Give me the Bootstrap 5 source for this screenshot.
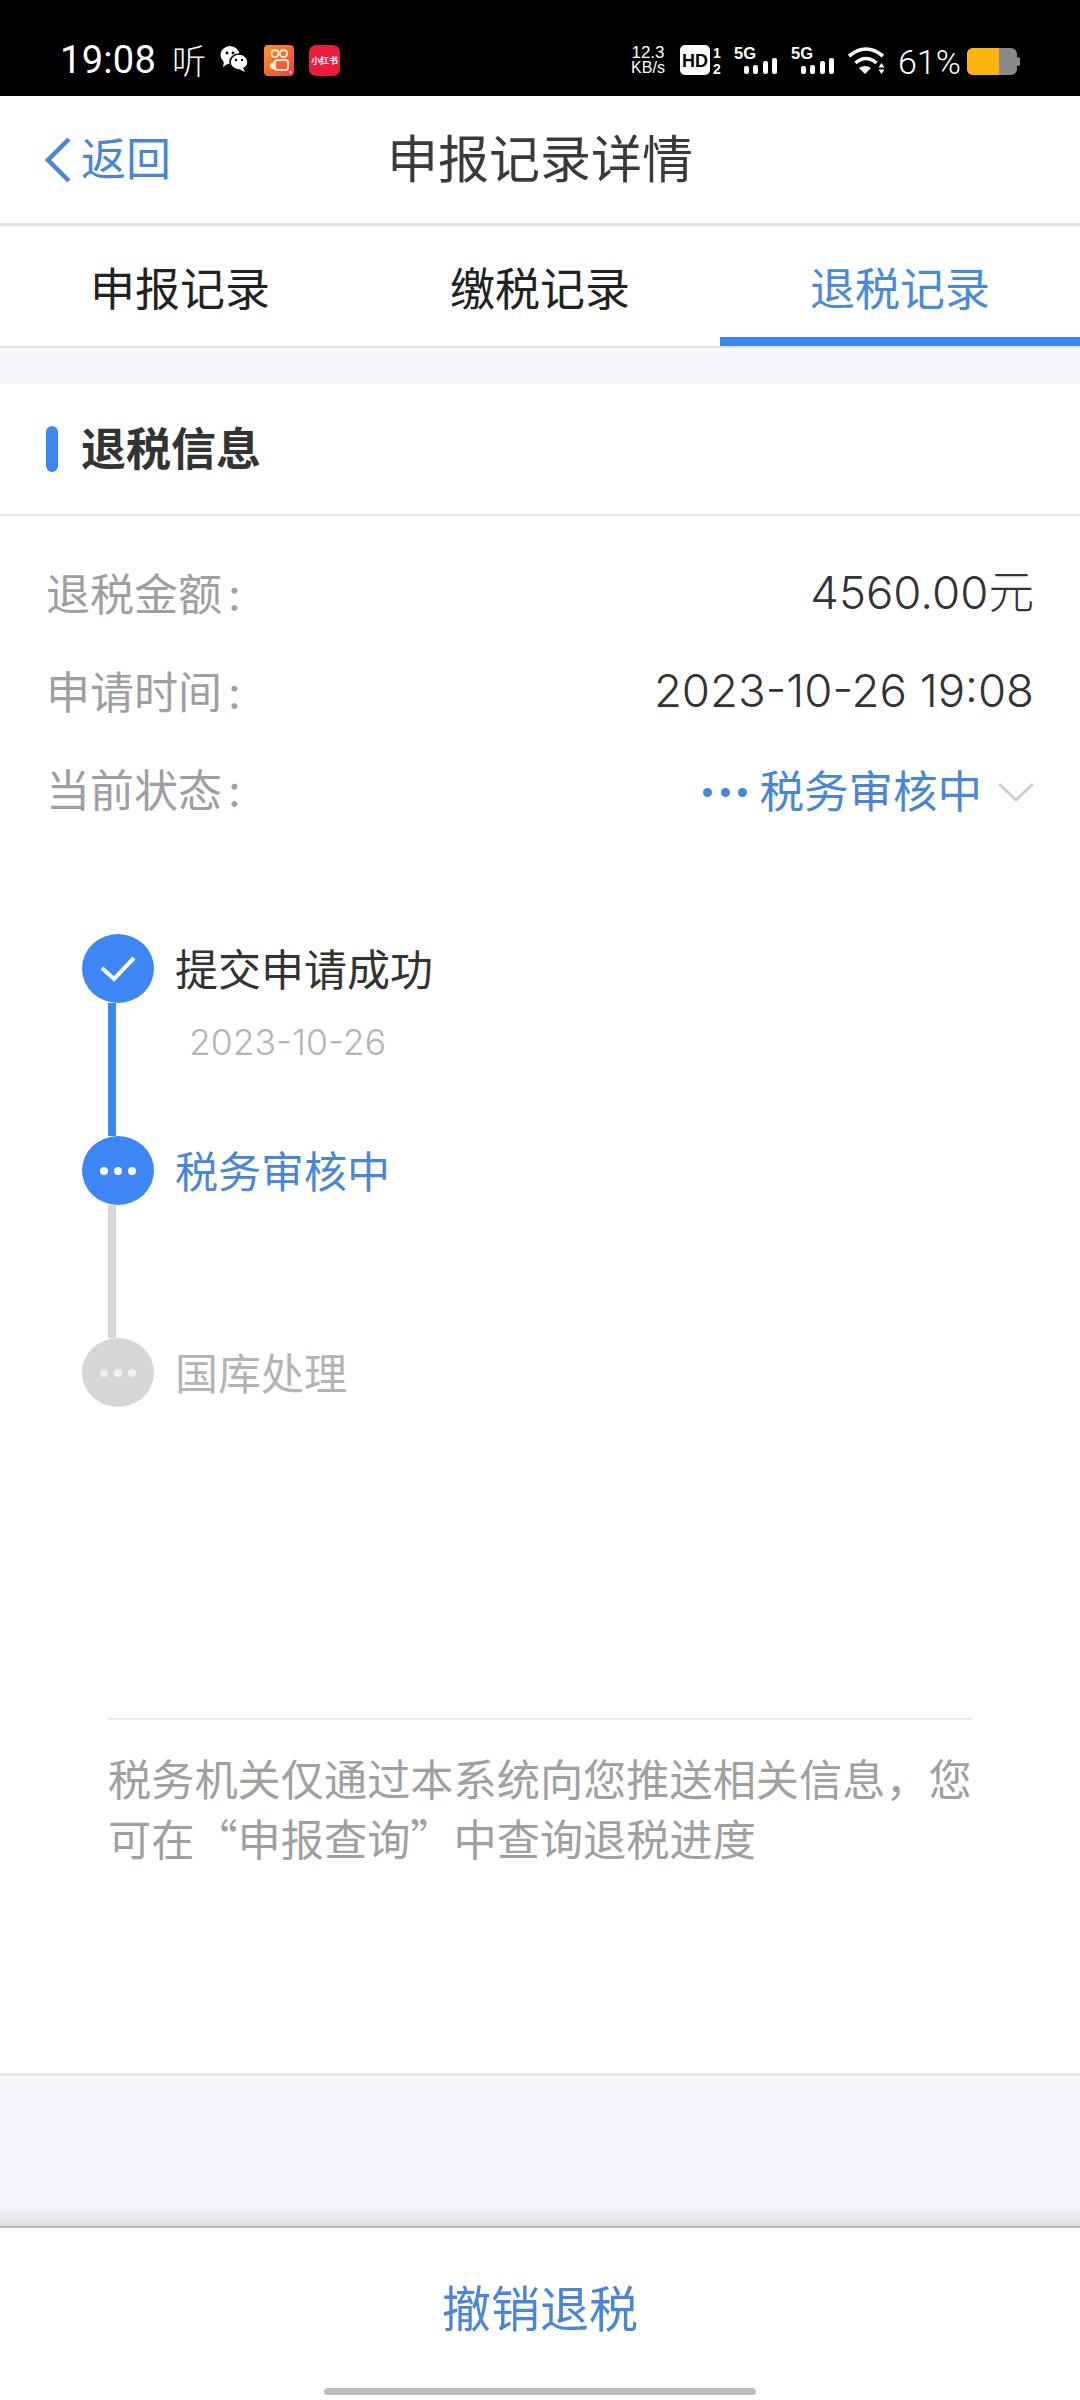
<!DOCTYPE html>
<html lang="zh-CN">
<head>
    <meta charset="UTF-8">
    <meta name="viewport" content="width=device-width, initial-scale=1.0">
    <title>申报记录详情</title>
    <link href="https://cdn.jsdelivr.net/npm/bootstrap@5.3.0/dist/css/bootstrap.min.css" rel="stylesheet">
    <style>
        html, body { margin: 0; background: #fff; }
        body { font-family: Inter, "Noto Sans CJK SC", sans-serif; color: #333; width: 1080px; height: 2400px; overflow: hidden; }
        .screen { width: 1080px; height: 2400px; }
        .screen > * { flex-shrink: 0; }

        /* status bar */
        .status-bar { height: 96px; background: #000; color: #fff; padding: 45px 60px 0 60px; }
        .status-bar svg { display: block; }
        .status-time { font-family: Roboto, sans-serif; font-size: 38px; line-height: 30px; width: 112px; letter-spacing: .3px; }
        .status-ting { font-size: 34px; line-height: 30px; width: 48px; font-weight: 200; font-family: "Noto Sans CJK SC", sans-serif; }
        .wechat-icon { margin: 1px 16px 0 0; }
        .tile-kw { margin-right: 15px; }
        .app-tile { width: 30px; height: 31px; border-radius: 4px; }
        .tile-red { width: 31px; border-radius: 7px; background: #ee1c3c; font-size: 9px; line-height: 31px; letter-spacing: -.2px; text-align: center; color: #fff; font-family: "Noto Sans CJK SC", sans-serif; font-weight: 700; white-space: nowrap; }
        .net-speed { font-family: "Liberation Sans", sans-serif; font-size: 17px; line-height: 15px; text-align: center; width: 36px; margin-right: 14px; }
        .net-speed div + div { font-size: 16px; }
        .gap-hd { margin-right: 11px; }
        .gap-sig { margin-right: 13px; }
        .batt-text { font-family: Roboto, sans-serif; font-size: 34px; line-height: 34px; font-weight: 300; width: 58px; margin-right: 11px; }
        .batt-icon { margin-top: 3px; }

        /* header + tabs */
        .top-bar { height: 127px; border-bottom: 3px solid #e4e4e4; box-sizing: content-box; }
        .top-side { flex: 1 1 0; }
        .back-link { padding-left: 45px; color: #4a86d6; font-size: 45px; line-height: 1; }
        .back-link span { margin-left: 10px; }
        .top-title { font-size: 51px; color: #3a3a3a; padding-top: 2px; }
        .tab-row { height: 122px; border-bottom: 2px solid #e4e4e4; }
        .tab-item { width: 360px; font-size: 45px; color: #222; text-align: center; line-height: 128px; }
        .tab-on { color: #4a8ad6; border-bottom: 9px solid #3f86f5; }
        .gray-band { height: 36px; background: #f5f6fa; }

        /* card */
        .section-head { height: 130px; padding-left: 46px; border-bottom: 2px solid #e8e8e8; box-sizing: content-box; }
        .section-bar { width: 12px; height: 46px; border-radius: 6px; background: #3f86f5; margin-right: 23px; }
        .section-title { font-size: 45px; font-weight: 700; color: #333; padding-top: 2px; }
        .info-list { padding: 31px 46px 0 46px; }
        .info-row { height: 98px; }
        .info-label { font-size: 44px; color: #9e9fa3; padding-bottom: 3px; }
        .label-colon { margin-left: 6px; }
        .info-value { font-size: 45.600px; font-weight: 300; color: #333; padding-bottom: 6px; }
        .status-value { color: #4a86d6; font-size: 44.500px; }
        .status-dots { gap: 8.500px; margin-right: 12px; }
        .status-dots i { width: 9px; height: 9px; border-radius: 50%; background: #4a86d6; display: block; }

        /* steps */
        .step-list { padding: 93px 0 0 82px; height: 877px; }
        .step-item { height: 202px; }
        .step-side { width: 72px; margin-right: 21px; flex: none; }
        .step-dot { width: 72px; height: 69px; border-radius: 50%; background: #3f86f5; gap: 6px; }
        .step-dot i { width: 8px; height: 8px; border-radius: 50%; background: #fff; display: block; }
        .step-off .step-dot { background: #d6d6d6; }
        .step-off .step-dot i { background: #f1f1f1; }
        .step-line { width: 8px; height: 133px; margin-left: 26px; background: #3f86f5; }
        .step-line-off { background: #d6d6d6; }
        .step-name { font-size: 43px; line-height: 73px; color: #333; }
        .step-now { color: #4a86d6; }
        .step-off .step-name { color: #b4b4b4; }
        .step-date { font-size: 35.500px; font-weight: 300; line-height: 40px; color: #b4b4b4; margin: 16px 0 0 14px; }
        .note-box { margin: 0 108px; border-top: 2px solid #ececec; padding-top: 27px; flex: 1 1 0; }
        .note-text { font-family: "Noto Sans CJK SC", sans-serif; font-size: 43.200px; line-height: 60px; color: #a0a0a0; margin: 0; }
        .pad-band { height: 150px; background: linear-gradient(#f5f6fa 0, #f5f6fa 132px, #dcdde0 150px); border-top: 3px solid #e4e4e4; border-bottom: 2px solid #b9bbc0; box-sizing: content-box; }
        .bottom-bar { height: 172px; padding-top: 3px; }
        .cancel-text { font-size: 49px; color: #4a86d6; line-height: 157px; text-align: center; }
        .home-pill { width: 432px; height: 7px; border-radius: 4px; background: #bdbdbd; margin: 0 auto; }
    </style>
</head>
<body>
<div class="screen d-flex flex-column">
    <div class="status-bar d-flex justify-content-between">
        <div class="d-flex align-items-start">
            <div class="status-time">19:08</div>
            <div class="status-ting">听</div>
            <svg class="wechat-icon" width="28" height="26" viewBox="0 0 28 26" fill="#fff">
                <ellipse cx="10" cy="9" rx="9.500" ry="9"/><path d="M4 15 3 21 9 17z"/>
                <ellipse cx="19" cy="16" rx="9" ry="8" stroke="#000" stroke-width="1.500"/><path d="M23 22 25 26 19 23z"/>
                <circle cx="7" cy="7" r="1.400" fill="#000"/><circle cx="13" cy="7" r="1.400" fill="#000"/>
                <circle cx="16" cy="14" r="1.200" fill="#000"/><circle cx="22" cy="14" r="1.200" fill="#000"/>
            </svg>
            <svg class="app-tile tile-kw" viewBox="0 0 30 31">
                <defs><linearGradient id="kw" x1="0" y1="0" x2="1" y2="1"><stop offset="0" stop-color="#f79a22"/><stop offset="1" stop-color="#ee3a45"/></linearGradient></defs>
                <rect width="30" height="31" rx="3" fill="url(#kw)"/>
                <g fill="none" stroke="#ffeacb" stroke-width="2">
                    <circle cx="11" cy="8.500" r="3.600"/><circle cx="19.500" cy="8.500" r="3.600"/>
                    <rect x="11" y="15" width="13" height="10" rx="2.500"/>
                </g>
                <path d="M11 16 6 19v4l5 2z" fill="#ffeacb"/>
                <path d="M26.500 26v2.500" stroke="#fff" stroke-width="1.500"/>
            </svg>
            <div class="app-tile tile-red">小红书</div>
        </div>
        <div class="d-flex align-items-start">
            <div class="net-speed"><div>12.3</div><div>KB/s</div></div>
            <svg class="gap-hd" width="43" height="30" viewBox="0 0 43 30">
                <rect width="30" height="30" rx="5" fill="#fff"/>
                <text x="15" y="22" text-anchor="middle" font-family="Liberation Sans" font-size="18" font-weight="700" fill="#000">HD</text>
                <text x="33" y="13" font-family="Liberation Sans" font-size="14" font-weight="700" fill="#fff">1</text>
                <text x="33" y="29" font-family="Liberation Sans" font-size="14" font-weight="700" fill="#fff">2</text>
            </svg>
            <svg class="gap-sig" width="44" height="30" viewBox="0 0 44 30">
                <text x="0" y="14" font-family="Liberation Sans" font-size="16.500" font-weight="700" fill="#fff">5G</text>
                <rect x="10" y="21" width="5" height="8" rx="2" fill="#fff"/><rect x="19" y="20" width="5" height="9" rx="2" fill="#fff"/><rect x="29" y="16" width="5" height="13" rx="2" fill="#fff"/><rect x="38" y="13" width="5" height="16" rx="2" fill="#fff"/>
            </svg>
            <svg class="gap-sig" width="44" height="30" viewBox="0 0 44 30">
                <text x="0" y="14" font-family="Liberation Sans" font-size="16.500" font-weight="700" fill="#fff">5G</text>
                <rect x="10" y="21" width="5" height="8" rx="2" fill="#fff"/><rect x="19" y="20" width="5" height="9" rx="2" fill="#fff"/><rect x="29" y="16" width="5" height="13" rx="2" fill="#fff"/><rect x="38" y="13" width="5" height="16" rx="2" fill="#fff"/>
            </svg>
            <svg class="gap-sig" width="37" height="30" viewBox="0 0 37 30">
                <g fill="none" stroke="#fff" stroke-width="3.600"><path d="M1 11Q18-3 35 11"/><path d="M7.500 18Q18 9 28.500 18"/></g>
                <path d="M11 23Q17 19 23 23L17 29z" fill="#fff"/>
                <path d="M33.500 18l3 4.500h-6zM33.500 29l3-4.500h-6z" fill="#fff"/>
            </svg>
            <div class="batt-text">61%</div>
            <svg class="batt-icon" width="53" height="27" viewBox="0 0 53 27">
                <rect width="50" height="27" rx="6" fill="#8a8a8a"/>
                <path d="M6 0h26v27H6a6 6 0 0 1-6-6V6a6 6 0 0 1 6-6z" fill="#fcb40f"/>
                <rect x="50" y="9" width="3" height="9" rx="1.500" fill="#8a8a8a"/>
            </svg>
        </div>
    </div>

    <div class="top-bar d-flex align-items-center">
        <div class="top-side">
            <div class="back-link d-flex align-items-center">
                <svg width="26" height="46" viewBox="0 0 26 46" fill="none" stroke="#4a86d6" stroke-width="4.500"><path d="M24 2 3 23l21 21"/></svg>
                <span>返回</span>
            </div>
        </div>
        <div class="top-title">申报记录详情</div>
        <div class="top-side"></div>
    </div>

    <div class="tab-row d-flex">
        <div class="tab-item">申报记录</div>
        <div class="tab-item">缴税记录</div>
        <div class="tab-item tab-on">退税记录</div>
    </div>
    <div class="gray-band"></div>

    <div class="section-head d-flex align-items-center">
        <div class="section-bar"></div>
        <div class="section-title">退税信息</div>
    </div>

    <div class="info-list">
        <div class="info-row d-flex justify-content-between align-items-center">
            <div class="info-label">退税金额<span class="label-colon">:</span></div>
            <div class="info-value">4560.00元</div>
        </div>
        <div class="info-row d-flex justify-content-between align-items-center">
            <div class="info-label">申请时间<span class="label-colon">:</span></div>
            <div class="info-value">2023-10-26 19:08</div>
        </div>
        <div class="info-row d-flex justify-content-between align-items-center">
            <div class="info-label">当前状态<span class="label-colon">:</span></div>
            <div class="status-value d-flex align-items-center">
                <div class="status-dots d-flex"><i></i><i></i><i></i></div>
                <span>税务审核中</span>
                <svg class="ms-3" width="36" height="20" viewBox="0 0 36 20" fill="none" stroke="#cfcfcf" stroke-width="3"><path d="M1 2 18 18 35 2"/></svg>
            </div>
        </div>
    </div>

    <div class="step-list">
        <div class="step-item d-flex">
            <div class="step-side">
                <div class="step-dot d-flex align-items-center justify-content-center">
                    <svg width="36" height="26" viewBox="0 0 36 26" fill="none" stroke="#fff" stroke-width="4"><path d="M2 12 14 23 34 2"/></svg>
                </div>
                <div class="step-line"></div>
            </div>
            <div>
                <div class="step-name">提交申请成功</div>
                <div class="step-date">2023-10-26</div>
            </div>
        </div>
        <div class="step-item d-flex">
            <div class="step-side">
                <div class="step-dot d-flex align-items-center justify-content-center"><i></i><i></i><i></i></div>
                <div class="step-line step-line-off"></div>
            </div>
            <div class="step-name step-now">税务审核中</div>
        </div>
        <div class="step-item d-flex step-off">
            <div class="step-side">
                <div class="step-dot d-flex align-items-center justify-content-center"><i></i><i></i><i></i></div>
            </div>
            <div class="step-name">国库处理</div>
        </div>
    </div>

    <div class="note-box">
        <p class="note-text">税务机关仅通过本系统向您推送相关信息&#xFF0C;您可在&#x201C;申报查询&#x201D;中查询退税进度</p>
    </div>
    <div class="pad-band"></div>
    <div class="bottom-bar">
        <div class="cancel-text">撤销退税</div>
        <div class="home-pill"></div>
    </div>
</div>
</body>
</html>
